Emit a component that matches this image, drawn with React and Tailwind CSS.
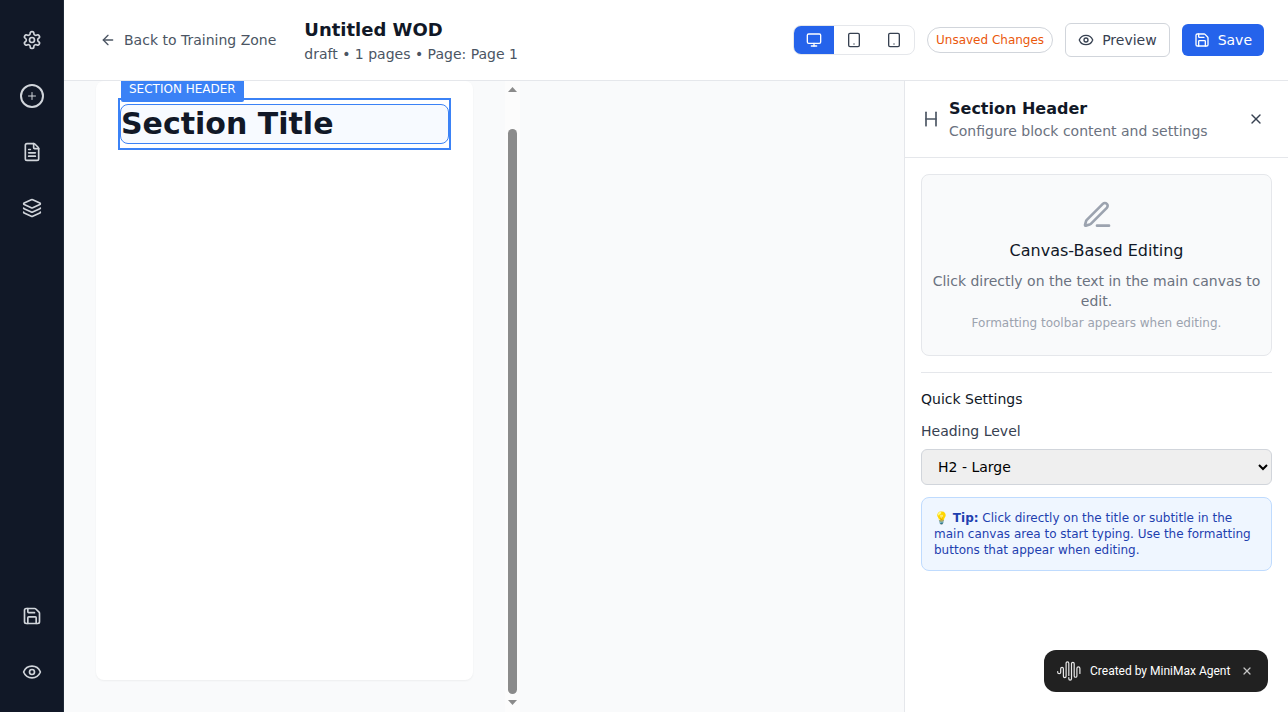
import React from "react";
import {
  ArrowLeft, Monitor, Tablet, Eye, Save, X, Heading, FileText, Layers, Plus,
} from "lucide-react";

const SANS = "font-['DejaVu_Sans','Noto_Sans',sans-serif]";

function SettingsIcon() {
  return (
    <svg width="20" height="20" viewBox="0 0 24 24" fill="none" stroke="currentColor" strokeWidth="2" strokeLinecap="round" strokeLinejoin="round">
      <path d="M12.22 2h-.44a2 2 0 0 0-2 2v.18a2 2 0 0 1-1 1.73l-.43.25a2 2 0 0 1-2 0l-.15-.08a2 2 0 0 0-2.73.73l-.22.38a2 2 0 0 0 .73 2.73l.15.1a2 2 0 0 1 1 1.72v.51a2 2 0 0 1-1 1.74l-.15.09a2 2 0 0 0-.73 2.73l.22.38a2 2 0 0 0 2.73.73l.15-.08a2 2 0 0 1 2 0l.43.25a2 2 0 0 1 1 1.73V20a2 2 0 0 0 2 2h.44a2 2 0 0 0 2-2v-.18a2 2 0 0 1 1-1.73l.43-.25a2 2 0 0 1 2 0l.15.08a2 2 0 0 0 2.73-.73l.22-.39a2 2 0 0 0-.73-2.73l-.15-.08a2 2 0 0 1-1-1.74v-.5a2 2 0 0 1 1-1.74l.15-.09a2 2 0 0 0 .73-2.73l-.22-.38a2 2 0 0 0-2.73-.73l-.15.08a2 2 0 0 1-2 0l-.43-.25a2 2 0 0 1-1-1.73V4a2 2 0 0 0-2-2z" />
      <circle cx="12" cy="12" r="3" />
    </svg>
  );
}

function PenLineIcon() {
  return (
    <svg width="32" height="32" viewBox="0 0 24 24" fill="none" stroke="currentColor" strokeWidth="2" strokeLinecap="round" strokeLinejoin="round">
      <path d="M12 20h9" />
      <path d="M16.376 3.622a1 1 0 0 1 3.002 3.002L7.368 18.635a2 2 0 0 1-.855.506l-2.872.838a.5.5 0 0 1-.62-.62l.838-2.872a2 2 0 0 1 .506-.854z" />
    </svg>
  );
}

function WaveLogo() {
  return (
    <svg width="24" height="20" viewBox="0 0 24 20" fill="none" stroke="#e8e8e8" strokeWidth="1.2" strokeLinecap="round" strokeLinejoin="round">
      <path d="M.7 10.500v.7a1.500 1.500 0 0 0 3 0V7.800a1.350 1.350 0 0 1 2.700 0v7.500a1.350 1.350 0 0 0 2.700 0V2.200a1.350 1.350 0 0 1 2.700 0v12.300" />
      <path d="M11.800 16.500v1.200a1.350 1.350 0 0 0 2.700 0V2.700a1.350 1.350 0 0 1 2.700 0v12.200a1.350 1.350 0 0 0 2.700 0V7.400a1.500 1.500 0 0 1 3 0v5" />
    </svg>
  );
}

function RailButton({ children }) {
  return <button className="flex size-10 items-center justify-center rounded-lg text-[#d1d5db]">{children}</button>;
}

function Sidebar() {
  return (
    <nav className="flex w-16 shrink-0 flex-col items-center justify-between border-r border-[#1f2937] bg-[#111827] py-5 pl-px">
      <div className="flex flex-col gap-4">
        <RailButton><SettingsIcon /></RailButton>
        <RailButton>
          <span className="flex size-6 items-center justify-center rounded-full border-2 border-current"><Plus size={12} /></span>
        </RailButton>
        <RailButton><FileText size={20} /></RailButton>
        <RailButton><Layers size={20} /></RailButton>
      </div>
      <div className="flex flex-col gap-4">
        <RailButton><Save size={20} /></RailButton>
        <RailButton><Eye size={20} /></RailButton>
      </div>
    </nav>
  );
}

function Header() {
  return (
    <header className="flex h-[81px] shrink-0 items-center justify-between border-b border-[#e5e7eb] bg-white pr-6 pl-9">
      <div className="flex items-center gap-7">
        <button className="flex items-center gap-2 text-sm text-[#4b5563]"><ArrowLeft size={16} />Back to Training Zone</button>
        <div>
          <h1 className="text-lg leading-7 font-bold text-[#111827]">Untitled WOD</h1>
          <p className="text-sm text-[#4b5563]">draft • 1 pages • Page: Page 1</p>
        </div>
      </div>
      <div className="flex items-center gap-3">
        <div className="flex h-[30px] overflow-hidden rounded-lg border border-[#e5e7eb] text-[#374151]">
          <span className="flex w-10 items-center justify-center bg-[#2563eb] text-white"><Monitor size={16} /></span>
          <span className="flex w-10 items-center justify-center"><Tablet size={16} /></span>
          <span className="flex w-10 items-center justify-center"><Tablet size={16} /></span>
        </div>
        <span className="rounded-full border border-[#d1d5db] px-2 py-1 text-xs text-[#ea580c]">Unsaved Changes</span>
        <button className="flex h-[34px] items-center gap-2 rounded-md border border-[#d1d5db] px-3 text-sm text-[#374151]"><Eye size={16} />Preview</button>
        <button className="flex h-8 items-center gap-2 rounded-md bg-[#2563eb] px-3 text-sm text-white"><Save size={16} />Save</button>
      </div>
    </header>
  );
}

function Canvas() {
  return (
    <main className="flex min-w-0 flex-1 bg-[#f9fafb]">
      <div className="h-[599px] w-[441px] shrink-0 px-8">
        <section className="h-full w-[377px] rounded-lg bg-white px-[22px] pt-[17px] shadow-[0_1px_2px_0_rgba(0,0,0,0.05)]">
          <div className="relative h-[52px] w-[333px] border-2 border-[#3b82f6] pt-1">
            <span className="absolute -top-[19px] left-px h-[21px] rounded-b-xs bg-[#3b82f6] px-2 text-xs text-white">SECTION HEADER</span>
            <h2 className="h-10 rounded-lg border border-[#3b82f6] bg-[#f7faff] text-3xl leading-[38px] font-bold text-[#111827]">Section Title</h2>
          </div>
        </section>
      </div>
      <div className="flex w-[15px] shrink-0 flex-col items-center bg-[#fcfcfc] pt-1.5 pb-[7px]">
        <svg width="9" height="5" viewBox="0 0 9 5" fill="#8b8b8b"><path d="M0 5 4.500 0 9 5Z" /></svg>
        <div className="mt-[37px] mb-1.5 w-[9px] flex-1 rounded-full bg-[#8b8b8b]" />
        <svg width="9" height="5" viewBox="0 0 9 5" fill="#8b8b8b"><path d="M0 0 4.500 5 9 0Z" /></svg>
      </div>
    </main>
  );
}

function Inspector() {
  return (
    <aside className="w-96 shrink-0 border-l border-[#e5e7eb] bg-white">
      <div className="flex h-[77px] items-center justify-between border-b border-[#e5e7eb] pr-6 pl-4">
        <div className="flex items-center gap-2">
          <Heading size={20} className="text-[#4b5563]" />
          <div>
            <h3 className="text-base leading-6 font-semibold text-[#111827]">Section Header</h3>
            <p className="text-sm text-[#6b7280]">Configure block content and settings</p>
          </div>
        </div>
        <X size={16} className="text-[#374151]" />
      </div>
      <div className="p-4">
        <div className="flex h-[182px] flex-col items-center rounded-lg border border-[#e5e7eb] bg-[#f9fafb] px-2 pt-6 text-center">
          <div className="mb-2 text-[#9ca3af]"><PenLineIcon /></div>
          <h4 className="mb-2 text-base text-[#111827]">Canvas-Based Editing</h4>
          <p className="text-sm text-[#6b7280]">Click directly on the text in the main canvas to edit.</p>
          <p className="mt-1 text-xs text-[#9ca3af]">Formatting toolbar appears when editing.</p>
        </div>
        <div className="mt-4 border-t border-[#e5e7eb] pt-4">
          <h4 className="text-sm text-[#111827]">Quick Settings</h4>
          <label className="mt-3 block text-sm text-[#374151]">Heading Level</label>
          <select className="mt-2 h-9 w-full rounded-md border border-[#d1d5db] bg-[#efefef] px-3 text-sm text-black"><option>H2 - Large</option></select>
          <div className="mt-3 rounded-lg border border-[#bfdbfe] bg-[#eff6ff] p-3 text-xs text-[#1e40af]">
            💡 <strong>Tip:</strong> Click directly on the title or subtitle in the main canvas area to start typing. Use the formatting buttons that appear when editing.
          </div>
        </div>
      </div>
    </aside>
  );
}

export default function App() {
  return (
    <div className={`${SANS} flex h-[712px] w-full overflow-hidden bg-white`}>
      <Sidebar />
      <div className="flex min-w-0 flex-1 flex-col">
        <Header />
        <div className="flex min-h-0 flex-1">
          <Canvas />
          <Inspector />
        </div>
      </div>
      <div className="fixed right-5 bottom-5 flex h-[42px] w-56 items-center rounded-xl bg-[#212121] pl-[13px] font-['Roboto',sans-serif] text-xs text-white">
        <WaveLogo />
        <span className="ml-[9px] w-[141px] whitespace-nowrap">Created by MiniMax Agent</span>
        <X size={12} strokeWidth={2.5} className="ml-2.5 text-[#c4c4c4]" />
      </div>
    </div>
  );
}
